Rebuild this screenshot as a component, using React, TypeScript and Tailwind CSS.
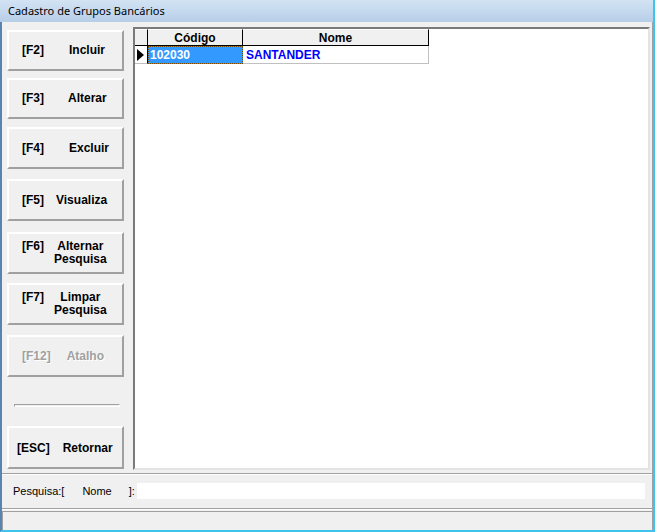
import React from 'react';

type Action = {
  key: string;
  lines: string[];
  mt: string;
  h: string;
  gap: string;
  disabled?: boolean;
};

const actions: Action[] = [
  { key: '[F2]', lines: ['Incluir'], mt: 'mt-[8px]', h: 'h-[41px]', gap: 'ml-[25px]' },
  { key: '[F3]', lines: ['Alterar'], mt: 'mt-[7px]', h: 'h-[41px]', gap: 'ml-[24px]' },
  { key: '[F4]', lines: ['Excluir'], mt: 'mt-[8px]', h: 'h-[42px]', gap: 'ml-[25px]' },
  { key: '[F5]', lines: ['Visualiza'], mt: 'mt-[10px]', h: 'h-[42px]', gap: 'ml-[12px]' },
  { key: '[F6]', lines: ['Alternar', 'Pesquisa'], mt: 'mt-[11px]', h: 'h-[42px]', gap: 'ml-[10px]' },
  { key: '[F7]', lines: ['Limpar', 'Pesquisa'], mt: 'mt-[9px]', h: 'h-[42px]', gap: 'ml-[10px]' },
  { key: '[F12]', lines: ['Atalho'], mt: 'mt-[10px]', h: 'h-[42px]', gap: 'ml-[16px]', disabled: true },
];

function ActionButton({ action }: { action: Action }) {
  return (
    <div
      className={`${action.mt} ${action.h} flex w-[117px] items-center border-2 border-t-white border-l-white border-b-[#a0a0a0] border-r-[#a0a0a0] bg-[#f0f0f0] pl-[13px] text-[12px] font-bold leading-[13px] ${
        action.disabled ? 'text-[#a0a0a0] [text-shadow:1px_1px_0_#ffffff]' : 'text-black'
      }`}
    >
      <div className="flex items-start">
        <span>{action.key}</span>
        <div className={`${action.gap} flex flex-col items-center`}>
          {action.lines.map((line) => (
            <span key={line}>{line}</span>
          ))}
        </div>
      </div>
    </div>
  );
}

export default function App() {
  return (
    <div className="flex h-[532px] w-[655px] flex-col overflow-hidden border-r-2 border-r-[#3cc4ec] bg-[#f0f0f0] font-['Liberation_Sans',Arial,sans-serif] text-black">
      {/* Title bar */}
      <div className="flex h-[22px] shrink-0 items-center bg-gradient-to-b from-[#d3e3f4] to-[#b7cee8] pl-[8px] font-['Noto_Sans',sans-serif] text-[11px] text-black">
        Cadastro de Grupos Bancários
      </div>

      <div className="flex flex-1 flex-col border-b-2 border-l-2 border-b-[#3cc4ec] border-l-[#5a84b0]">
        <div className="flex flex-1 flex-col border-r border-r-[#a0a0a0]">
          {/* Main area */}
          <div className="flex h-[451px] shrink-0">
            <div className="flex w-[131px] shrink-0 flex-col pl-[5px]">
              {actions.map((a) => (
                <ActionButton key={a.key} action={a} />
              ))}
              <div className="ml-[7px] mt-[27px] h-[3px] w-[106px] border border-t-[#a0a0a0] border-l-[#a0a0a0] border-b-white border-r-white" />
              <div className="mt-[19px] flex h-[43px] w-[117px] items-center border-2 border-t-white border-l-white border-b-[#a0a0a0] border-r-[#a0a0a0] pl-[8px] text-[12px] font-bold">
                <span>[ESC]</span>
                <span className="ml-[13px]">Retornar</span>
              </div>
            </div>

            {/* Grid */}
            <div className="mt-[5px] h-[443px] w-[517px] border-2 border-t-[#7a7a7a] border-l-[#7a7a7a] border-b-[#e3e3e3] border-r-[#e3e3e3] bg-white">
              <div className="flex h-[17px] text-[12px] font-bold">
                <div className="w-[13px] border-r border-b border-t border-t-white border-r-black border-b-black bg-[#f0f0f0]" />
                <div className="flex w-[95px] items-center justify-center border-r border-b border-t border-t-white border-r-black border-b-black bg-[#f0f0f0]">
                  Código
                </div>
                <div className="flex w-[186px] items-center justify-center border-r border-b border-t border-t-white border-r-black border-b-black bg-[#f0f0f0]">
                  Nome
                </div>
              </div>
              <div className="flex h-[18px] text-[12px] font-bold">
                <div className="flex w-[13px] items-center border-r border-b border-r-black border-b-[#c0c0c0] bg-white pl-[2px]">
                  <svg width="7" height="12" viewBox="0 0 7 12">
                    <path d="M0 0 L7 6 L0 12 Z" fill="#000" />
                  </svg>
                </div>
                <div className="flex w-[95px] items-center border border-dotted border-[#7a4a00] bg-[#3399ff] pl-[1px] text-white">
                  102030
                </div>
                <div className="flex w-[186px] items-center border-r border-b border-[#c0c0c0] bg-white pl-[3px] text-[#0000ff]">
                  SANTANDER
                </div>
              </div>
            </div>
          </div>

          <div className="h-[2px] shrink-0 border-t border-t-[#a0a0a0] border-b border-b-white" />

          {/* Search row */}
          <div className="flex h-[32px] shrink-0 items-center text-[11px]">
            <span className="ml-[11px]">Pesquisa:[</span>
            <span className="ml-[18px]">Nome</span>
            <span className="ml-[17px]">]:</span>
            <div className="ml-[2px] h-[16px] w-[508px] bg-white" />
          </div>

          <div className="mt-[1px] h-[2px] shrink-0 border-t border-t-[#a0a0a0] border-b border-b-white" />

          {/* Status bar */}
          <div className="mt-[1px] flex-1 border-t border-l border-t-[#a0a0a0] border-l-[#a0a0a0]" />
        </div>
      </div>
    </div>
  );
}
